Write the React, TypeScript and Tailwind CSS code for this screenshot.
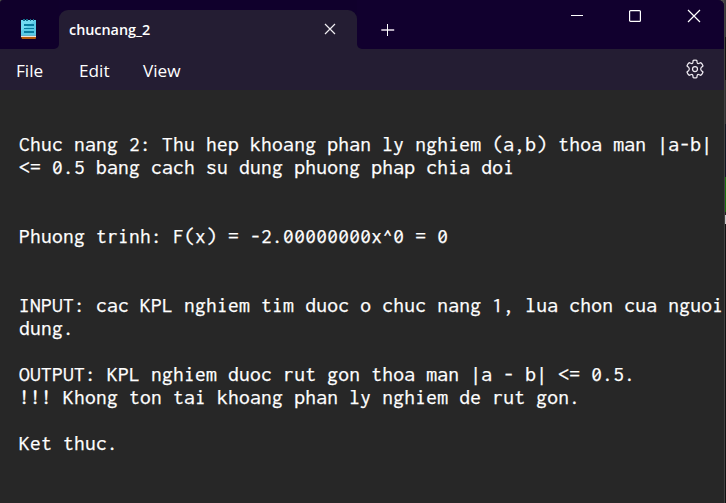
const lines = [
  'Chuc nang 2: Thu hep khoang phan ly nghiem (a,b) thoa man |a-b|',
  '<= 0.5 bang cach su dung phuong phap chia doi',
  '',
  '',
  'Phuong trinh: F(x) = -2.00000000x^0 = 0',
  '',
  '',
  'INPUT: cac KPL nghiem tim duoc o chuc nang 1, lua chon cua nguoi',
  'dung.',
  '',
  'OUTPUT: KPL nghiem duoc rut gon thoa man |a - b| <= 0.5.',
  '!!! Khong ton tai khoang phan ly nghiem de rut gon.',
  '',
  'Ket thuc.',
];

function NotepadIcon() {
  return (
    <svg className="mt-[19px] ml-[21px] h-5 w-[15px] shrink-0" viewBox="0 0 15 20">
      <path d="M0 17h15v2a1 1 0 0 1-1 1H1l-1-2z" fill="#b55b0b" />
      <path d="M0 16.5h15V18H0z" fill="#eee5dc" />
      <path d="M0 1h15v15.7H0z" fill="#5bcbe7" />
      <path d="M0 1h15L0 12z" fill="#72daf2" />
      <path d="M3 5h10v2H3zM3 9h10v1H3zM3 12h10v2H3z" fill="#087b9f" />
      <path d="M2 0h2v2H2zM5 0h2v2H5zM9 0h1v2H9zM12 0h1v2h-1z" fill="#13718f" />
    </svg>
  );
}

function TitleBar() {
  return (
    <header className="flex h-[49px] w-full bg-[#11002e]">
      <div className="flex w-[59px] shrink-0 bg-[#241d33]">
        <div className="flex w-full rounded-br-[5px] bg-[#10002b]">
          <NotepadIcon />
        </div>
      </div>
      <div className="w-[298px] shrink-0 bg-[#10002c] pt-[10px]">
        <div className="flex h-[39px] rounded-t-[9px] bg-[#241d33] pl-[10px]">
          <span className="w-[255px] pt-[9px] text-[14.4px] leading-[21px] font-semibold tracking-[-0.02px]">chucnang_2</span>
          <svg className="mt-[13px] h-3 w-3" viewBox="0 0 12 12" fill="none" stroke="#f0eef2" strokeWidth="1.2">
            <path d="M1 1l10 10M11 1L1 11" />
          </svg>
        </div>
      </div>
      <div className="flex grow bg-[#241d33]">
        <div className="flex grow rounded-bl-[5px] bg-[#11002e]">
          <svg className="mt-[23px] ml-6 h-[14px] w-[14px]" viewBox="0 0 14 14" fill="none">
            <path d="M.3 7h12.9" stroke="#b5aabe" strokeWidth="2" />
            <path d="M6.5 1v12" stroke="#fff" />
          </svg>
          <svg className="mt-[9px] ml-[176px] h-[14px] w-[13px]" viewBox="0 0 13 14">
            <path d="M0 6.5h12" stroke="#fff" />
          </svg>
          <svg className="mt-[9px] ml-[44px] h-[14px] w-[14px]" viewBox="0 0 14 14" fill="none">
            <rect x="1.6" y="1.6" width="10.8" height="10.8" rx="1" stroke="#fff" strokeWidth="1.2" />
          </svg>
          <svg className="mt-[9px] ml-[45px] h-[14px] w-[14px]" viewBox="0 0 14 14" fill="none">
            <path d="M1 1l12 12M13 1L1 13" stroke="#fff" strokeWidth="1.2" />
          </svg>
        </div>
      </div>
    </header>
  );
}

function MenuBar() {
  return (
    <nav className="flex h-[41px] bg-[#241d33] pl-4 text-[17.2px] leading-[24px]">
      <span className="w-[63px] pt-[10px]">File</span>
      <span className="w-[64px] pt-[10px]">Edit</span>
      <span className="w-[542px] pt-[10px]">View</span>
      <svg className="mt-[10px] h-5 w-5" viewBox="0 0 20 20" fill="none" stroke="#eeeaf1" strokeWidth="1.25" strokeLinejoin="round">
        <path d="M8.2 1.4Q10 1 11.8 1.4L12.2 3.7Q12.6 4.7 13.7 4.5L15.9 3.7Q17.4 5 18 7L16.2 8.5Q15.1 10 16.2 11.5L18 13Q17.4 15 15.9 16.3L13.7 15.5Q12.6 15.3 12.2 16.3L11.8 18.6Q10 19 8.2 18.6L7.8 16.3Q7.4 15.3 6.3 15.5L4.1 16.3Q2.6 15 2 13L3.8 11.5Q4.9 10 3.8 8.5L2 7Q2.6 5 4.1 3.7L6.3 4.5Q7.4 4.7 7.8 3.7Z" />
        <circle cx="10" cy="10" r="2.5" />
      </svg>
    </nav>
  );
}

function Desktop() {
  return (
    <aside className="flex w-[2px] shrink-0 flex-col border-l border-[#414141] bg-[#111]">
      <div className="h-[37px] bg-[#383838]" />
      <div className="h-[43px] bg-[#111]" />
      <div className="h-[44px] bg-[#303030]" />
      <div className="h-[53px] bg-[#10151f]" />
      <div className="h-[35px] bg-[#176d0b]" />
      <div className="h-[3px] bg-[#222]" />
      <div className="h-[9px] bg-[#c9c9c9]" />
    </aside>
  );
}

export default function App() {
  return (
    <div className="flex h-[503px] w-[726px] overflow-hidden bg-[#4a4a4a] font-['Segoe_UI','Open_Sans',sans-serif] text-white">
      <main className="w-[724px] shrink-0 overflow-hidden rounded-tl-[4px] rounded-tr-[6px] bg-[#272727]">
        <TitleBar />
        <MenuBar />
        <pre className="pt-[43px] pl-[19px] font-[Consolas,Inconsolata,'DejaVu_Sans_Mono',monospace] text-[21.5px] leading-[23px] tracking-[0.255px] [-webkit-text-stroke:0.25px_white]">{lines.join('\n')}</pre>
      </main>
      <Desktop />
    </div>
  );
}
